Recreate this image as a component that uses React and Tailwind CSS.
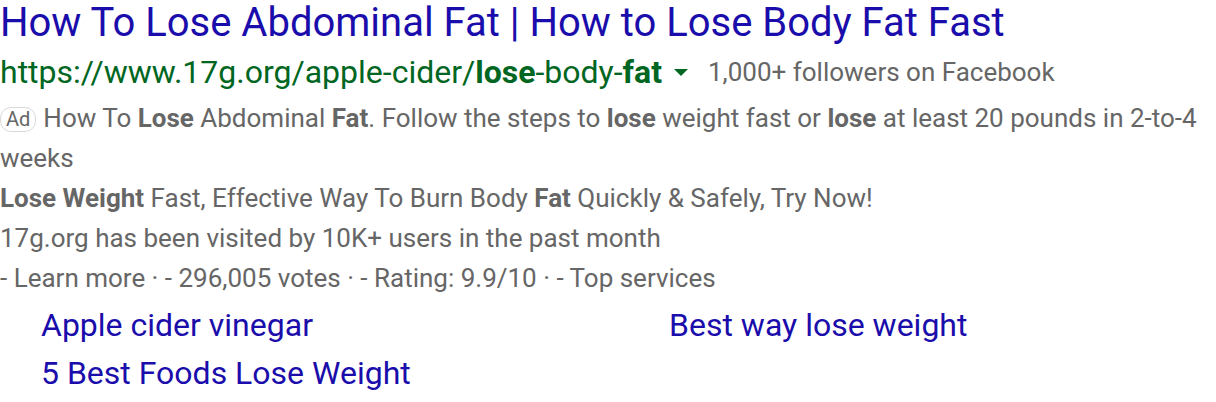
function Ad() {
    return (
        <span className="inline-flex items-center justify-center h-[25px] px-[5px] mr-[7px] rounded-[11px] border border-[#d9d9d9] text-[20px] leading-none text-[#666] align-[1px]">
            Ad
        </span>
    );
}

function App() {
    return (
        <div
            className="w-[1216px] h-[402px] bg-white overflow-hidden"
            style={{ fontFamily: "Roboto, 'Liberation Sans', sans-serif" }}
        >
            <h1 className="text-[40px] leading-[46px] text-[#1a0dab] whitespace-nowrap">
                How To Lose Abdominal Fat | How to Lose Body Fat Fast
            </h1>
            <div className="flex items-center h-[52px] whitespace-nowrap">
                <span className="text-[32px] text-[#006621]">
                    https://www.17g.org/apple-cider/<b>lose</b>-body-<b>fat</b>
                </span>
                <span className="ml-[12px] mr-[20px] border-x-[7px] border-x-transparent border-t-[7px] border-t-[#006621]" />
                <span className="text-[26px] text-[#666]">1,000+ followers on Facebook</span>
            </div>
            <div className="text-[26px] leading-[40px] text-[#666]">
                <p>
                    <Ad />
                    How To <b>Lose</b> Abdominal <b>Fat</b>. Follow the steps to <b>lose</b> weight fast or{" "}
                    <b>lose</b> at least 20 pounds in 2-to-4 weeks
                </p>
                <p>
                    <b>Lose Weight</b> Fast, Effective Way To Burn Body <b>Fat</b> Quickly &amp; Safely, Try Now!
                </p>
                <p>17g.org has been visited by 10K+ users in the past month</p>
                <p>- Learn more · - 296,005 votes · - Rating: 9.9/10 · - Top services</p>
            </div>
            <div className="grid grid-cols-[628px_1fr] pl-[41px] pt-[3px] text-[32px] leading-[48px] text-[#1a0dab]">
                <span>Apple cider vinegar</span>
                <span>Best way lose weight</span>
                <span>5 Best Foods Lose Weight</span>
            </div>
        </div>
    );
}

export default App;
